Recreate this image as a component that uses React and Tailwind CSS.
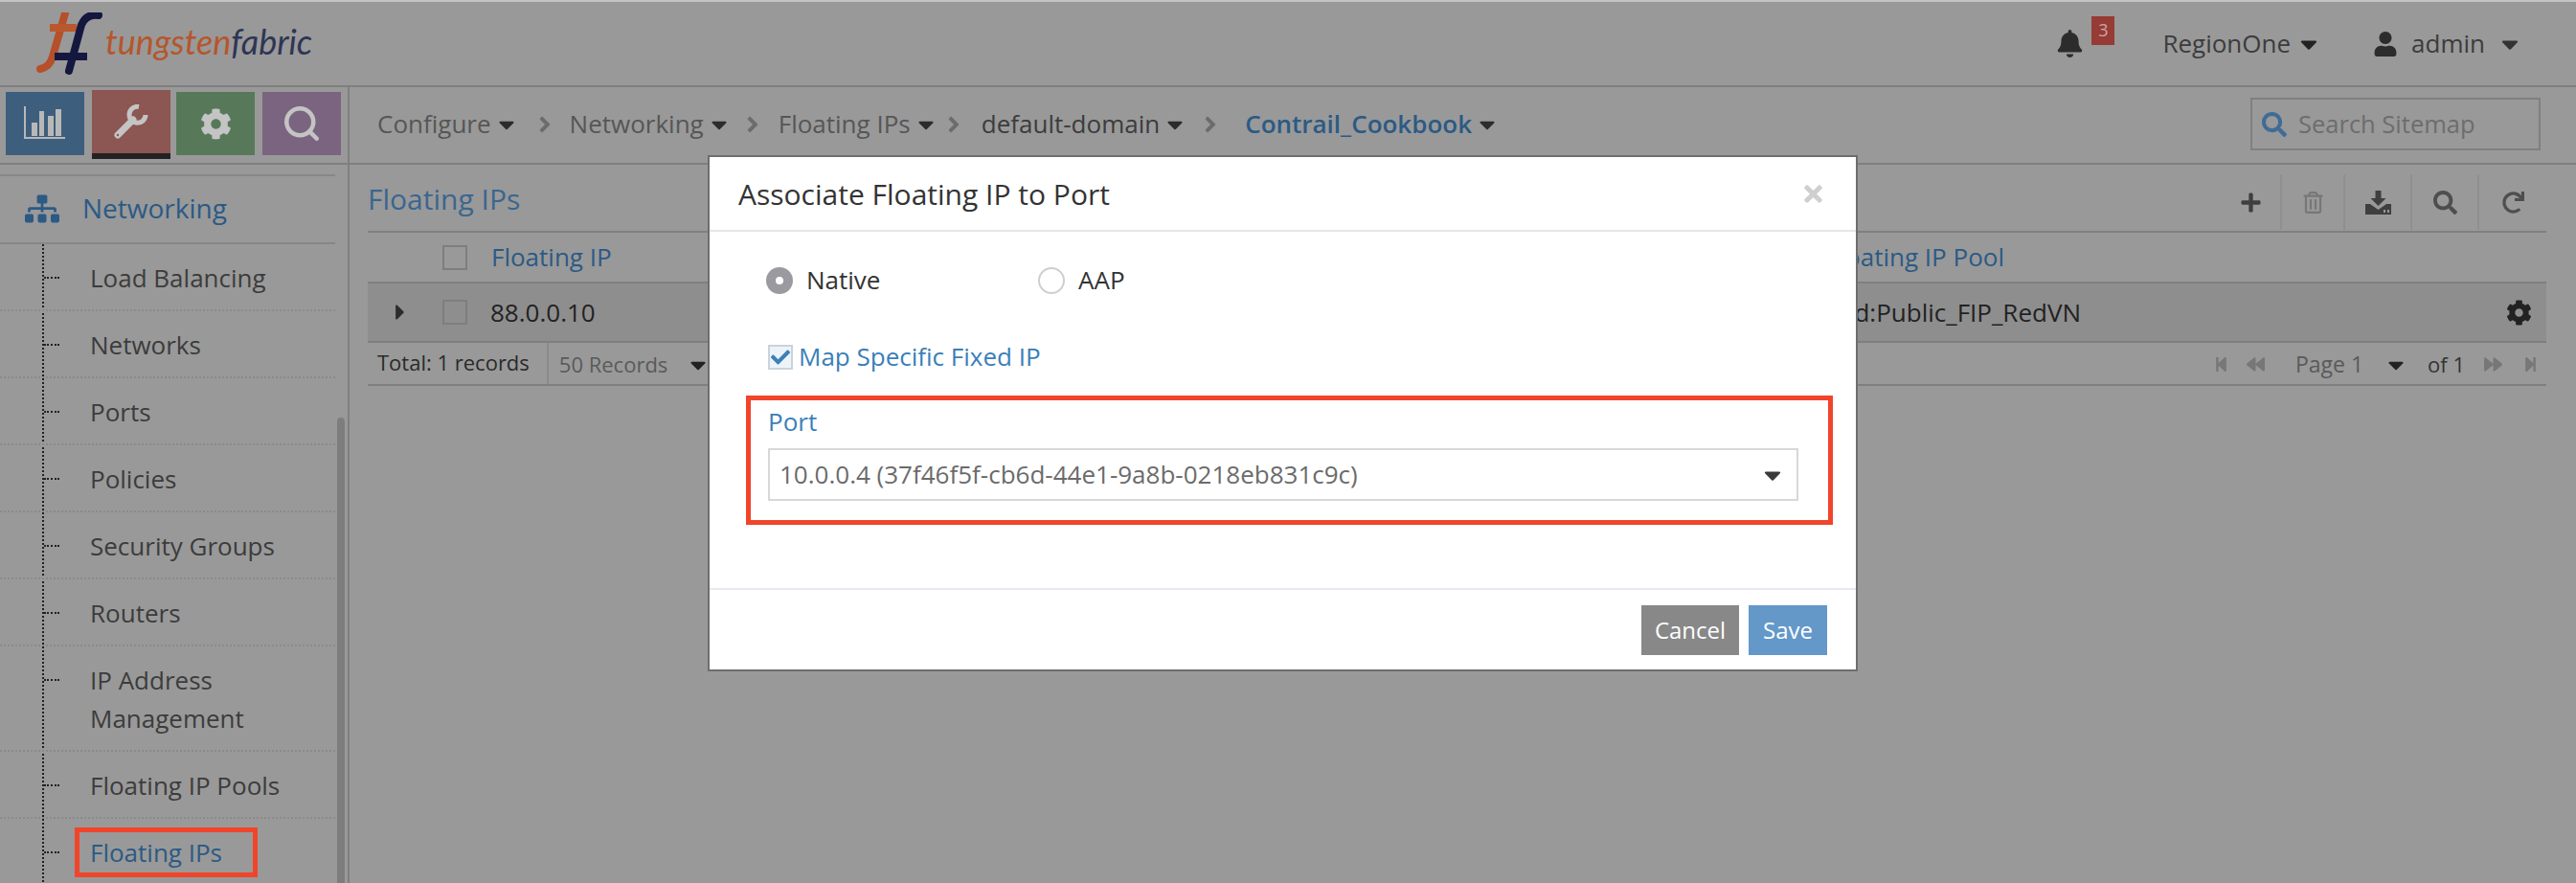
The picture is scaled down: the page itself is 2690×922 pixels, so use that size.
import React from 'react';
import { Search } from 'lucide-react';
import {
  FaBell, FaUser, FaCaretDown, FaCaretRight, FaSearch, FaCog, FaSitemap, FaPlus,
  FaRegTrashAlt, FaRedo, FaCheck, FaTimes, FaStepBackward, FaStepForward, FaBackward, FaForward, FaAngleRight,
} from 'react-icons/fa';

const menuItems = ['Load Balancing', 'Networks', 'Ports', 'Policies', 'Security Groups', 'Routers'];

function Logo() {
  return (
    <svg width="70" height="66" viewBox="0 0 70 66" className="shrink-0">
      <path d="M30 1 L17 46 Q14 57 4 59" fill="none" stroke="#b5502a" strokeWidth="8" strokeLinecap="round" />
      <path d="M14 16 H42" fill="none" stroke="#b9582c" strokeWidth="8" />
      <path d="M65 3 Q52 1 47 13 L34 61" fill="none" stroke="#14183f" strokeWidth="8" strokeLinecap="round" />
      <path d="M19 46 H53" fill="none" stroke="#14183f" strokeWidth="8" />
    </svg>
  );
}

function ChartIcon() {
  return (
    <svg width="44" height="36" viewBox="0 0 44 36" fill="#b8b8b8">
      <rect x="0" y="0" width="2" height="33" />
      <rect x="0" y="32" width="43" height="2" />
      <rect x="8" y="17" width="6" height="14" />
      <rect x="16" y="5" width="5" height="26" />
      <rect x="25" y="10" width="6" height="21" />
      <rect x="33" y="3" width="6" height="28" />
    </svg>
  );
}

function WrenchIcon() {
  return (
    <svg width="36" height="36" viewBox="0 0 36 36" fill="none" stroke="#c4c4c4">
      <path d="M4 32 L20 16" strokeWidth="7" strokeLinecap="round" />
      <path d="M33 11 A8.500 8.500 0 1 1 26 2.500" strokeWidth="5" />
      <circle cx="4" cy="32" r="1.200" fill="#8c5653" stroke="none" />
    </svg>
  );
}

function DownloadIcon() {
  return (
    <svg width="27" height="25" viewBox="0 0 27 25" fill="#3f3f3f">
      <path d="M10.500 0 h6 v8 h5 l-8 8 l-8 -8 h5 z" />
      <path d="M0 14 h5 l8.500 6 l8.500 -6 h5 v11 h-27 z" />
      <rect x="19" y="20" width="2" height="3" fill="#999" />
      <rect x="23" y="20" width="2" height="3" fill="#999" />
    </svg>
  );
}

function Check({ checked }) {
  return (
    <span className={checked
      ? 'flex h-[26px] w-[26px] shrink-0 items-center justify-center border-2 border-[#c9d3dc] bg-[#eef3f8]'
      : 'block h-[26px] w-[26px] shrink-0 border-2 border-[#7e7e7e]'}>
      {checked && <FaCheck className="text-[20px] text-[#3d7fb9]" />}
    </span>
  );
}

function ToolButton({ children, className }) {
  return (
    <div className={`flex h-[58px] items-center justify-center ${className}`}>
      {children}
    </div>
  );
}

function Sidebar() {
  return (
    <aside className="relative w-[365px] shrink-0 overflow-hidden border-r-2 border-[#7f7f7f]">
      <div className="flex h-[81px] items-start border-b-2 border-[#7f7f7f]">
        <div className="ml-[6px] mt-[5px] flex h-[66px] w-[82px] items-center justify-center bg-[#3d5f7d]"><ChartIcon /></div>
        <div className="ml-[8px] mt-[3px] flex h-[72px] w-[82px] items-center justify-center border-b-[6px] border-[#222] bg-[#8c5653]"><WrenchIcon /></div>
        <div className="ml-[6px] mt-[5px] flex h-[66px] w-[82px] items-center justify-center bg-[#57795a]"><FaCog className="text-[33px] text-[#c4c4c4]" /></div>
        <div className="ml-[8px] mt-[5px] flex h-[66px] w-[82px] items-center justify-center bg-[#7a6480]"><Search size={42} strokeWidth={2.6} className="text-[#c4c4c4]" /></div>
      </div>
      <div className="mt-[10px] w-[350px] border-t-2 border-[#878787]">
        <div className="flex h-[71px] items-center border-b-2 border-[#878787] pb-[2px] pl-[26px] text-[#2b5a85]">
          <FaSitemap className="text-[36px]" />
          <span className="mb-[2px] ml-[24px] text-[28px]">Networking</span>
        </div>
        <div className="relative text-[26px] leading-[40px] text-[#3c3c3c]">
          <div className="absolute bottom-0 left-[44px] top-0 border-l-2 border-dotted border-[#222]" />
          {menuItems.map((item) => (
            <MenuRow key={item}>{item}</MenuRow>
          ))}
          <MenuRow>IP Address<br />Management</MenuRow>
          <MenuRow>Floating IP Pools</MenuRow>
          <MenuRow><span className="text-[#2b5a85]">Floating IPs</span></MenuRow>
        </div>
      </div>
      <div className="absolute bottom-0 left-[352px] top-[345px] w-[8px] rounded-t-[4px] bg-[#7d7d7d]" />
    </aside>
  );
}

function MenuRow({ children }) {
  return (
    <div className="relative border-b-2 border-dotted border-[#8a8a8a] pb-[13px] pl-[94px] pt-[15px]">
      <span className="absolute left-[46px] top-[34px] w-[16px] border-t-2 border-dotted border-[#222]" />
      {children}
    </div>
  );
}

function Crumb({ label, className, bold }) {
  return (
    <div className={`flex items-center ${className}`}>
      <span className={bold ? 'font-semibold text-[#2b5a85]' : ''}>{label}</span>
      <FaCaretDown className="ml-[3px] text-[26px] text-[#2c2c2c]" />
    </div>
  );
}

function Breadcrumb() {
  return (
    <div className="flex h-[81px] items-center border-b-2 border-[#7f7f7f] pb-[2px] pl-[29px] pr-[37px] text-[26px] text-[#565656]">
      <Crumb label="Configure" />
      <FaAngleRight className="ml-[14px] text-[26px] text-[#6c6c6c]" />
      <Crumb label="Networking" className="ml-[13px]" />
      <FaAngleRight className="ml-[9px] text-[26px] text-[#6c6c6c]" />
      <Crumb label="Floating IPs" className="ml-[14px]" />
      <FaAngleRight className="ml-[3px] text-[26px] text-[#6c6c6c]" />
      <Crumb label="default-domain" className="ml-[16px] text-[#3c3c3c]" />
      <FaAngleRight className="ml-[11px] text-[26px] text-[#6c6c6c]" />
      <Crumb label="Contrail_Cookbook" className="ml-[23px]" bold />
      <div className="ml-auto flex h-[55px] w-[303px] items-center border-2 border-[#808080] pl-[10px]">
        <FaSearch className="text-[26px] text-[#3f6c97]" />
        <span className="ml-[12px] text-[25.500px] text-[#6d6d6d]">Search Sitemap</span>
      </div>
    </div>
  );
}

function Grid() {
  return (
    <div className="ml-[19px] w-[2275px]">
      <div className="flex h-[71px] items-center justify-between border-b-2 border-[#7f7f7f]">
        <span className="pt-[2px] text-[30px] text-[#3a6690]">Floating IPs</span>
        <div className="mb-[1px] flex items-center self-end">
          <ToolButton className="w-[64px] border-r-2 border-[#8f8f8f]"><FaPlus className="text-[23px] text-[#3f3f3f]" /></ToolButton>
          <ToolButton className="w-[66px] border-r-2 border-[#8f8f8f]"><FaRegTrashAlt className="text-[23px] text-[#777]" /></ToolButton>
          <ToolButton className="w-[70px] border-r-2 border-[#8f8f8f]"><DownloadIcon /></ToolButton>
          <ToolButton className="w-[70px] border-r-2 border-[#8f8f8f]"><FaSearch className="text-[25px] text-[#4e4e4e]" /></ToolButton>
          <ToolButton className="w-[70px]"><FaRedo className="text-[23px] text-[#4e4e4e]" /></ToolButton>
        </div>
      </div>
      <div className="flex h-[53px] items-center border-b-2 border-[#7f7f7f] text-[26px] text-[#2b5a85]">
        <div className="ml-[78px]"><Check /></div>
        <span className="ml-[25px]">Floating IP</span>
        <span className="ml-auto mr-[566px]">Floating IP Pool</span>
      </div>
      <div className="flex h-[62px] items-center border-b-2 border-[#7f7f7f] bg-[#8e8e8e] text-[26px] text-[#222]">
        <FaCaretRight className="ml-[21px] text-[26px] text-[#2c2c2c]" />
        <div className="ml-[31px]"><Check /></div>
        <span className="ml-[24px]">88.0.0.10</span>
        <span className="ml-auto mr-[444px]">d:Public_FIP_RedVN</span>
        <FaCog className="mr-[15px] text-[27px] text-[#222]" />
      </div>
      <div className="flex h-[45px] items-center border-b-2 border-[#7f7f7f] text-[#5a5a5a]">
        <span className="mb-[2px] ml-[10px] text-[22px] text-[#2a2a2a]">Total: 1 records</span>
        <div className="ml-[18px] flex h-full items-center border-l-2 border-[#8a8a8a] pl-[11px] pt-[2px] text-[22px]">
          50 Records
          <FaCaretDown className="ml-[19px] text-[26px] text-[#222]" />
        </div>
        <div className="ml-auto mr-[8px] flex items-center pt-[2px] text-[22px]">
          <FaStepBackward className="text-[17px] text-[#777]" />
          <FaBackward className="ml-[18px] text-[19px] text-[#777]" />
          <span className="ml-[32px] text-[23px]">Page 1</span>
          <FaCaretDown className="ml-[21px] text-[26px] text-[#222]" />
          <span className="ml-[20px] text-[#333]">of 1</span>
          <FaForward className="ml-[20px] text-[19px] text-[#777]" />
          <FaStepForward className="ml-[21px] text-[17px] text-[#777]" />
        </div>
      </div>
    </div>
  );
}

function Radio({ checked, label }) {
  return (
    <div className="flex items-center">
      {checked ? (
        <span className="flex h-[28px] w-[28px] items-center justify-center rounded-full bg-[#9a9aa0]">
          <span className="h-[8px] w-[8px] rounded-full bg-white" />
        </span>
      ) : (
        <span className="h-[28px] w-[28px] rounded-full border-2 border-[#cfcfcf] bg-white" />
      )}
      <span className="ml-[14px]">{label}</span>
    </div>
  );
}

function Modal() {
  return (
    <div className="absolute left-[739px] top-[160px] flex h-[539px] w-[1201px] flex-col border-2 border-[#6e6e6e] bg-white text-[26px]">
      <div className="flex h-[78px] items-center justify-between border-b-2 border-[#e6e6e6] pl-[30px] pr-[31px]">
        <span className="text-[30px] text-[#333]">Associate Floating IP to Port</span>
        <FaTimes className="text-[27px] text-[#cfcfcf]" />
      </div>
      <div className="h-[374px] border-b-2 border-[#e6eaee] text-[#333]">
        <div className="ml-[59px] mt-[31px] flex">
          <div className="w-[284px]"><Radio checked label="Native" /></div>
          <Radio label="AAP" />
        </div>
        <div className="ml-[61px] mt-[41px] flex items-center text-[#3a7fb8]">
          <Check checked />
          <span className="ml-[6px]">Map Specific Fixed IP</span>
        </div>
        <div className="ml-[38px] mt-[21px] h-[135px] w-[1135px] border-[5px] border-[#f0452a] pl-[18px] pt-[3px]">
          <div className="leading-[38px] text-[#3a7fb8]">Port</div>
          <div className="mt-[9px] flex h-[55px] w-[1076px] items-center justify-between border-2 border-[#d8d8d8] pl-[10px] pr-[11px] text-[#6b6b6b]">
            <span>10.0.0.4 (37f46f5f-cb6d-44e1-9a8b-0218eb831c9c)</span>
            <FaCaretDown className="text-[28px] text-[#3a3a3a]" />
          </div>
        </div>
      </div>
      <div className="flex flex-1 items-start justify-end pr-[30px] pt-[16px] text-white">
        <button className="h-[52px] w-[102px] bg-[#888888] text-[24px]">Cancel</button>
        <button className="ml-[10px] h-[52px] w-[82px] bg-[#6398c8] text-[24px]">Save</button>
      </div>
    </div>
  );
}

export default function App() {
  return (
    <div className="relative flex h-[922px] w-[2690px] flex-col overflow-hidden border-t-2 border-[#c4c4c4] bg-[#999999] font-['Open_Sans',sans-serif]">
      <header className="flex h-[87px] shrink-0 items-center">
        <div className="ml-[38px] flex items-center">
          <Logo />
          <span className="mb-[6px] ml-[2px] font-['Lato',sans-serif] text-[36px] italic leading-none">
            <span className="text-[#b5562c]">tungsten</span><span className="text-[#2e3554]">fabric</span>
          </span>
        </div>
        <div className="ml-auto mr-[55px] flex items-center text-[26px] text-[#3c3c3c]">
          <FaBell className="text-[29px] text-[#2c2c2c]" />
          <span className="mb-[28px] ml-[8px] flex h-[30px] w-[24px] items-center justify-center bg-[#963b35] text-[18px] text-[#c9a8a5]">3</span>
          <span className="ml-[50px]">RegionOne</span>
          <FaCaretDown className="ml-[5px] text-[28px] text-[#222]" />
          <FaUser className="ml-[53px] text-[26px] text-[#2c2c2c]" />
          <span className="ml-[14px]">admin</span>
          <FaCaretDown className="ml-[12px] text-[28px] text-[#333]" />
        </div>
      </header>
      <div className="flex min-h-0 flex-1 border-t-2 border-[#7f7f7f]">
        <Sidebar />
        <main className="flex-1">
          <Breadcrumb />
          <Grid />
        </main>
      </div>
      <Modal />
      {/* red annotation around the active menu item */}
      <div className="absolute left-[78px] top-[862px] h-[52px] w-[191px] border-[5px] border-[#f0452a]" />
    </div>
  );
}
